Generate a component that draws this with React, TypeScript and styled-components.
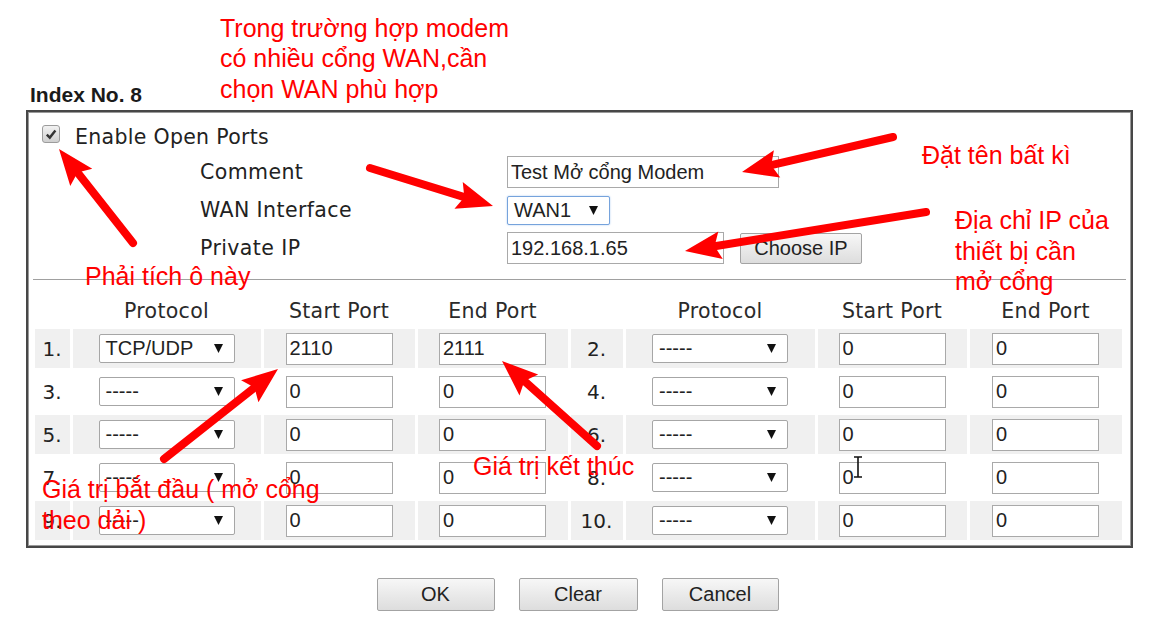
import React from 'react';
import styled, { createGlobalStyle } from 'styled-components';

const GlobalStyle = createGlobalStyle`
  html, body {
    margin: 0;
    padding: 0;
    background: #ffffff;
  }
  body {
    font-family: "DejaVu Sans", Verdana, sans-serif;
    color: #222222;
  }
`;

const Page = styled.div`
  position: relative;
  width: 1171px;
  height: 629px;
  overflow: hidden;
  padding-left: 26px;
  box-sizing: border-box;
`;

const Header = styled.div`
  display: flex;
  align-items: flex-end;
  height: 110px;
  padding-bottom: 6px;
  box-sizing: border-box;
`;

const Title = styled.div`
  flex-shrink: 0;
  width: 190px;
  margin: 0 0 -3px 4px;
  font-family: "Liberation Sans", Arial, sans-serif;
  font-weight: bold;
  font-size: 21px;
  line-height: 24px;
  color: #1a1a1a;
`;

const Note = styled.div<{ $left?: number; $top?: number }>`
  font-family: "Liberation Sans", Arial, sans-serif;
  font-size: 25px;
  line-height: 30.5px;
  color: #ff0000;
  white-space: nowrap;
  ${({ $left, $top }) =>
    $left !== undefined
      ? `position: absolute; left: ${$left}px; top: ${$top}px; pointer-events: none;`
      : ''}
`;

const Box = styled.div`
  width: 1107px;
  height: 438px;
  box-sizing: border-box;
  border: 2px solid #474747;
  box-shadow: inset 0 0 0 1px #9a9a9a;
`;

const CheckRow = styled.label`
  display: flex;
  align-items: center;
  gap: 15px;
  height: 30px;
  padding: 7px 0 0 14px;
  font-size: 20.5px;
  letter-spacing: 0.3px;
`;

const CheckText = styled.span`
  margin-top: 6px;
`;

const CheckBox = styled.span`
  display: flex;
  align-items: center;
  justify-content: center;
  width: 18px;
  height: 18px;
  box-sizing: border-box;
  border: 1px solid #9c9c9c;
  border-radius: 3px;
  background: linear-gradient(#f2f2f2, #cfcfcf);
`;

const FormGrid = styled.div`
  display: grid;
  grid-template-columns: 307px auto;
  grid-auto-rows: 38px;
  align-items: center;
  margin: 4px 0 0 172px;
`;

const FieldLabel = styled.div`
  font-size: 20.5px;
  letter-spacing: 0.4px;
`;

const Controls = styled.div`
  display: flex;
  align-items: center;
  gap: 16px;
`;

const TextInput = styled.input<{ $w: number }>`
  width: ${({ $w }) => $w}px;
  height: 32px;
  box-sizing: border-box;
  padding: 0 3px;
  border: 1px solid #a9a9a9;
  font-family: "Liberation Sans", Arial, sans-serif;
  font-size: 20px;
  color: #222222;
  background: #ffffff;
  outline: none;
`;

const SelectBox = styled.div<{ $w: number; $focus?: boolean }>`
  display: inline-flex;
  align-items: center;
  justify-content: space-between;
  width: ${({ $w }) => $w}px;
  height: 29px;
  box-sizing: border-box;
  padding: 0 11px 0 6px;
  border: 1px solid ${({ $focus }) => ($focus ? '#76a3dc' : '#a6a6a6')};
  border-radius: 2px;
  box-shadow: ${({ $focus }) => ($focus ? '0 0 2px #a9c8ef' : 'none')};
  background: #ffffff;
  font-family: "Liberation Sans", Arial, sans-serif;
  font-size: 20px;
  color: #222222;
  text-align: left;
`;

const Button = styled.button<{ $w: number; $h: number }>`
  width: ${({ $w }) => $w}px;
  height: ${({ $h }) => $h}px;
  padding: 0;
  border: 1px solid #a3a3a3;
  border-radius: 2px;
  background: linear-gradient(#f7f7f7, #dddddd);
  font-family: "Liberation Sans", Arial, sans-serif;
  font-size: 20px;
  color: #222222;
`;

const Divider = styled.div`
  height: 1px;
  margin: 12px 5px 0;
  background: #a0a0a0;
`;

const PortTable = styled.table`
  border-collapse: separate;
  border-spacing: 3.5px 4px;
  table-layout: fixed;
  margin: 13px 0 0 3.5px;
`;

const Col = styled.col<{ $w: number }>`
  width: ${({ $w }) => $w}px;
`;

const HeadCell = styled.th`
  height: 28px;
  padding: 0;
  font-size: 20.5px;
  letter-spacing: 0.3px;
  font-weight: normal;
  text-align: center;
  vertical-align: middle;
  color: #2a2a2a;
`;

const Cell = styled.td<{ $shade: boolean }>`
  height: 39px;
  padding: 0;
  text-align: center;
  vertical-align: middle;
  background: ${({ $shade }) => ($shade ? '#f0f0f0' : 'transparent')};
  font-size: 20px;
`;

const ButtonBar = styled.div`
  display: flex;
  justify-content: center;
  gap: 24px;
  width: 1103px;
  margin-top: 30px;
`;

const Overlay = styled.svg`
  position: absolute;
  left: 0;
  top: 0;
  pointer-events: none;
`;

const Caret = () => (
  <svg width="9" height="9" viewBox="0 0 9 9">
    <polygon points="0,0 9,0 4.5,9" fill="#111" />
  </svg>
);

const Select = ({ value, w, focus }: { value: string; w: number; focus?: boolean }) => (
  <SelectBox $w={w} $focus={focus}>
    <span>{value}</span>
    <Caret />
  </SelectBox>
);

const Arrow = ({ x1, y1, x2, y2 }: { x1: number; y1: number; x2: number; y2: number }) => {
  const len = Math.hypot(x2 - x1, y2 - y1);
  const ux = (x2 - x1) / len;
  const uy = (y2 - y1) / len;
  const hl = 36;
  const hw = 14;
  const bx = x2 - ux * hl;
  const by = y2 - uy * hl;
  const px = -uy;
  const py = ux;
  return (
    <g fill="#ff0000" stroke="#ff0000">
      <line x1={x1} y1={y1} x2={bx + ux * 6} y2={by + uy * 6} strokeWidth={8} strokeLinecap="round" />
      <polygon
        stroke="none"
        points={`${x2},${y2} ${bx + px * hw},${by + py * hw} ${bx + ux * 6},${by + uy * 6} ${bx - px * hw},${by - py * hw}`}
      />
    </g>
  );
};

type Entry = { n: number; proto: string; start: string; end: string };

const entries: Entry[] = Array.from({ length: 10 }, (_, i) => ({
  n: i + 1,
  proto: i === 0 ? 'TCP/UDP' : '-----',
  start: i === 0 ? '2110' : '0',
  end: i === 0 ? '2111' : '0',
}));

const rows = [0, 1, 2, 3, 4].map(r => [entries[r * 2], entries[r * 2 + 1]]);

const colWidths = [35, 188, 151, 150, 52, 189, 149, 152];

export default function App() {
  return (
    <Page>
      <GlobalStyle />
      <Header>
        <Title>Index No. 8</Title>
        <Note>
          Trong trường hợp modem
          <br />
          có nhiều cổng WAN,cần
          <br />
          chọn WAN phù hợp
        </Note>
      </Header>

      <Box>
        <CheckRow>
          <CheckBox>
            <svg width="12" height="12" viewBox="0 0 12 12">
              <path d="M1.8 6.6 L4.8 9.6 L10.4 2.4" fill="none" stroke="#333" strokeWidth="2.4" />
            </svg>
          </CheckBox>
          <CheckText>Enable Open Ports</CheckText>
        </CheckRow>

        <FormGrid>
          <FieldLabel>Comment</FieldLabel>
          <Controls>
            <TextInput $w={272} defaultValue="Test Mở cổng Modem" />
          </Controls>
          <FieldLabel>WAN Interface</FieldLabel>
          <Controls>
            <Select value="WAN1" w={103} focus />
          </Controls>
          <FieldLabel>Private IP</FieldLabel>
          <Controls>
            <TextInput $w={217} defaultValue="192.168.1.65" />
            <Button $w={122} $h={31}>Choose IP</Button>
          </Controls>
        </FormGrid>

        <Divider />

        <PortTable>
          <colgroup>
            {colWidths.map((w, i) => (
              <Col key={i} $w={w} />
            ))}
          </colgroup>
          <thead>
            <tr>
              <HeadCell />
              <HeadCell>Protocol</HeadCell>
              <HeadCell>Start Port</HeadCell>
              <HeadCell>End Port</HeadCell>
              <HeadCell />
              <HeadCell>Protocol</HeadCell>
              <HeadCell>Start Port</HeadCell>
              <HeadCell>End Port</HeadCell>
            </tr>
          </thead>
          <tbody>
            {rows.map((pair, r) => (
              <tr key={r}>
                {pair.map(e => (
                  <React.Fragment key={e.n}>
                    <Cell $shade={r % 2 === 0}>{e.n}.</Cell>
                    <Cell $shade={r % 2 === 0}>
                      <Select value={e.proto} w={136} />
                    </Cell>
                    <Cell $shade={r % 2 === 0}>
                      <TextInput $w={107} defaultValue={e.start} />
                    </Cell>
                    <Cell $shade={r % 2 === 0}>
                      <TextInput $w={107} defaultValue={e.end} />
                    </Cell>
                  </React.Fragment>
                ))}
              </tr>
            ))}
          </tbody>
        </PortTable>
      </Box>

      <ButtonBar>
        <Button $w={118} $h={33}>OK</Button>
        <Button $w={119} $h={33}>Clear</Button>
        <Button $w={117} $h={33}>Cancel</Button>
      </ButtonBar>

      <Note $left={922} $top={140}>Đặt tên bất kì</Note>
      <Note $left={955} $top={205}>
        Địa chỉ IP của
        <br />
        thiết bị cần
        <br />
        mở cổng
      </Note>
      <Note $left={85} $top={261}>Phải tích ô này</Note>
      <Note $left={473} $top={451}>Giá trị kết thúc</Note>
      <Note $left={42} $top={474}>
        Giá trị bắt đầu ( mở cổng
        <br />
        theo dải )
      </Note>

      <Overlay width="1171" height="629" viewBox="0 0 1171 629">
        <Arrow x1={133} y1={243} x2={59} y2={149} />
        <Arrow x1={370} y1={168} x2={493} y2={206} />
        <Arrow x1={893} y1={137} x2={742} y2={172} />
        <Arrow x1={926} y1={212} x2={685} y2={251} />
        <Arrow x1={164} y1={459} x2={278} y2={369} />
        <Arrow x1={597} y1={446} x2={502} y2={361} />
        <path d="M854 457 h8 M858 457 v20 M854 477 h8" stroke="#111" strokeWidth="1.6" fill="none" />
      </Overlay>
    </Page>
  );
}
